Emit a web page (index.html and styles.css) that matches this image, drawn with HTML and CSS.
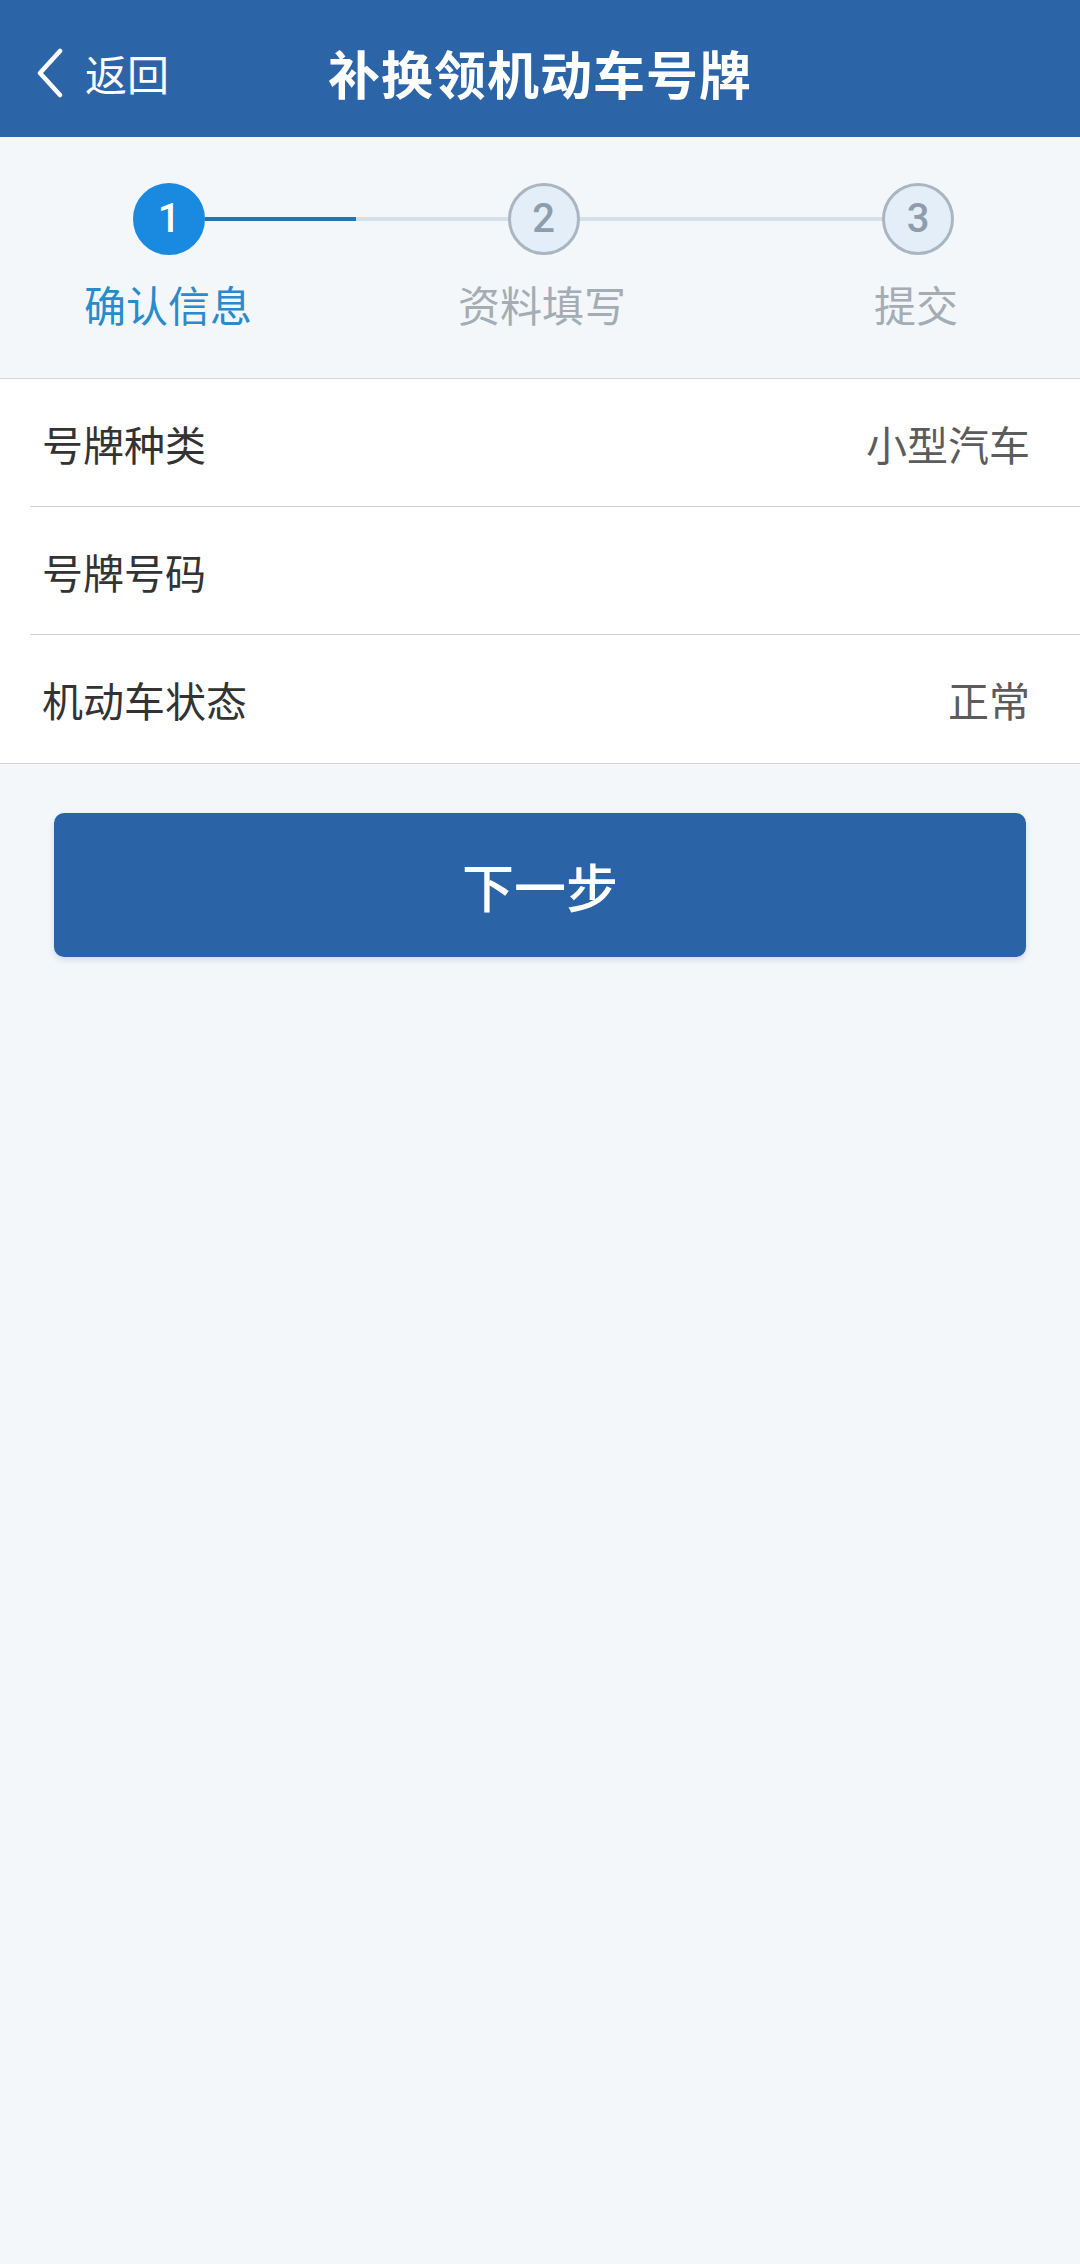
FILE: index.html
```html
<!DOCTYPE html>
<html lang="zh-CN">
<head>
<meta charset="utf-8">
<title>补换领机动车号牌</title>
<link rel="stylesheet" href="styles.css">
</head>
<body>
<div class="page">
  <header class="topbar">
    <div class="back">
      <svg class="chev" width="30" height="50" viewBox="0 0 30 50"><path d="M25 3 L5 25 L25 47" fill="none" stroke="#fff" stroke-width="4.5" stroke-linecap="round" stroke-linejoin="round"/></svg>
      <span class="back-text">返回</span>
    </div>
    <h1 class="title">补换领机动车号牌</h1>
    <div class="spacer"></div>
  </header>

  <section class="steps">
    <div class="track">
      <div class="dot active">1</div>
      <div class="bar half"></div>
      <div class="dot">2</div>
      <div class="bar"></div>
      <div class="dot">3</div>
    </div>
    <div class="labels">
      <span class="label active">确认信息</span>
      <span class="label">资料填写</span>
      <span class="label">提交</span>
    </div>
  </section>

  <section class="info">
    <div class="row"><span class="key">号牌种类</span><span class="val">小型汽车</span></div>
    <div class="row"><span class="key">号牌号码</span><span class="val"></span></div>
    <div class="row"><span class="key">机动车状态</span><span class="val">正常</span></div>
  </section>

  <div class="actions">
    <button class="next">下一步</button>
  </div>
</div>
</body>
</html>
```
FILE: styles.css
```css
* { box-sizing: border-box; }
html, body { margin: 0; padding: 0; }
body {
  width: 1080px;
  min-height: 2264px;
  background: #f3f7fa;
  font-family: "Noto Sans CJK SC", "Noto Sans", sans-serif;
}
.page { min-height: 2264px; background: #f3f7fa; }

.topbar {
  height: 137px;
  background: #2c64a8;
  display: grid;
  grid-template-columns: 1fr auto 1fr;
  align-items: center;
  color: #fff;
  padding-top: 9px;
}
.back {
  display: flex;
  align-items: center;
  padding-left: 35px;
  gap: 20px;
}
.chev { display: block; }
.back-text {
  font-size: 42px;
  line-height: 1;
}
.title {
  margin: 0;
  font-size: 52px;
  font-weight: 700;
  letter-spacing: 1px;
  line-height: 1;
}

.steps {
  height: 242px;
  border-bottom: 1px solid #d3d8dc;
  padding-top: 46px;
}
.track {
  display: flex;
  align-items: center;
  padding: 0 126px 0 133px;
}
.dot {
  width: 72px;
  height: 72px;
  flex: none;
  border-radius: 50%;
  border: 3px solid #a9b5c0;
  background: #e4eef9;
  color: #8e9dab;
  font-family: Roboto, "Noto Sans", sans-serif;
  font-size: 40px;
  font-weight: 500;
  display: flex;
  align-items: center;
  justify-content: center;
  line-height: 1;
}
.dot.active {
  background: #1a8ae0;
  border-color: #1a8ae0;
  color: #fff;
}
.bar {
  flex: 1;
  height: 4px;
  background: #d6e0e8;
}
.bar.half {
  background: linear-gradient(to right, #1f77b6 50%, #d6e0e8 50%);
}
.labels {
  display: grid;
  grid-template-columns: repeat(3, 250px);
  column-gap: 124px;
  padding-left: 43px;
  margin-top: 22px;
}
.label {
  text-align: center;
  font-size: 42px;
  line-height: 54px;
  color: #a4acb4;
}
.label.active { color: #2a8ace; }

.info {
  background: #fff;
  border-bottom: 1px solid #d3d6d9;
  padding-left: 30px;
}
.row {
  height: 128px;
  display: flex;
  align-items: center;
  justify-content: space-between;
  padding: 0 50px 0 12px;
  border-bottom: 1px solid #d0d3d6;
}
.row:last-child { border-bottom: none; }
.key {
  font-size: 41px;
  color: #333;
}
.val {
  font-size: 41px;
  color: #5c5c5c;
}

.actions {
  padding: 49px 54px 0;
}
.next {
  display: block;
  width: 100%;
  height: 144px;
  border: none;
  border-radius: 10px;
  background: #2b63a7;
  color: #fff;
  font-family: "Noto Sans CJK SC", "Noto Sans", sans-serif;
  font-size: 52px;
  font-weight: 500;
  box-shadow: 0 3px 6px rgba(43, 99, 167, 0.18);
}
```
